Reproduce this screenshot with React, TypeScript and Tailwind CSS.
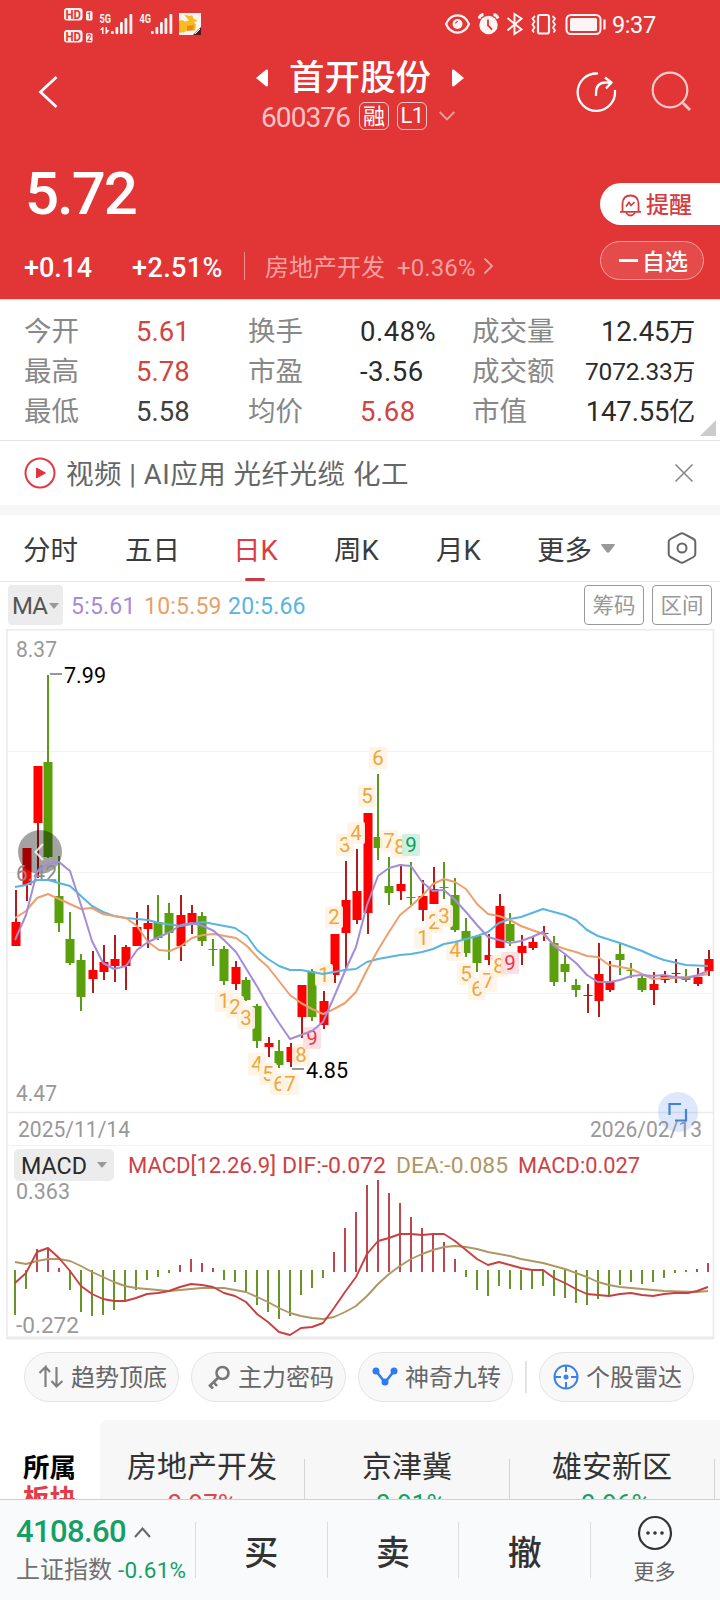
import type { ReactNode } from 'react'
import clsx from 'clsx'

const UP = '#fe0000'
const DOWN = '#5aa00d'

// x, direction, high, body top, body bottom, low
type Candle = [number, 'u' | 'd', number, number, number, number]

const candles: Candle[] = [
  [16, 'u', 890, 922, 946, 946],
  [27, 'u', 848, 848, 885, 901],
  [38, 'u', 766, 766, 823, 878],
  [48, 'd', 675, 762, 857, 858],
  [59, 'd', 856, 896, 923, 932],
  [70, 'd', 912, 939, 963, 965],
  [81, 'd', 954, 960, 997, 1011],
  [93, 'u', 951, 970, 979, 993],
  [104, 'u', 945, 962, 972, 980],
  [115, 'u', 935, 959, 966, 982],
  [126, 'u', 945, 947, 966, 990],
  [137, 'u', 912, 927, 946, 946],
  [148, 'u', 905, 923, 929, 948],
  [158, 'd', 895, 922, 938, 940],
  [169, 'd', 903, 913, 933, 960],
  [181, 'u', 895, 915, 946, 961],
  [192, 'u', 905, 913, 924, 934],
  [202, 'd', 912, 916, 941, 946],
  [213, 'd', 939, 949, 950, 966],
  [224, 'd', 946, 949, 981, 985],
  [236, 'u', 961, 967, 984, 990],
  [246, 'd', 977, 980, 1000, 1001],
  [257, 'd', 1004, 1006, 1041, 1048],
  [269, 'u', 1037, 1043, 1047, 1057],
  [279, 'd', 1040, 1051, 1065, 1068],
  [291, 'u', 1043, 1047, 1062, 1067],
  [302, 'u', 985, 985, 1017, 1038],
  [312, 'd', 969, 971, 1017, 1021],
  [324, 'u', 991, 1001, 1025, 1029],
  [335, 'u', 934, 934, 975, 983],
  [346, 'u', 861, 900, 933, 970],
  [357, 'u', 849, 891, 920, 924],
  [368, 'u', 813, 813, 913, 934],
  [378, 'd', 774, 837, 848, 860],
  [389, 'd', 857, 886, 893, 905],
  [401, 'u', 864, 884, 891, 900],
  [411, 'd', 862, 897, 898, 905],
  [423, 'u', 880, 896, 910, 921],
  [434, 'u', 867, 889, 904, 904],
  [444, 'd', 862, 887, 888, 899],
  [455, 'd', 878, 895, 930, 932],
  [466, 'd', 918, 931, 953, 957],
  [477, 'd', 935, 936, 963, 972],
  [489, 'u', 934, 955, 960, 965],
  [500, 'u', 894, 906, 948, 948],
  [510, 'd', 913, 924, 941, 946],
  [522, 'u', 935, 946, 953, 965],
  [533, 'u', 937, 942, 948, 950],
  [544, 'u', 926, 933, 934, 941],
  [554, 'd', 936, 943, 982, 986],
  [565, 'd', 955, 964, 972, 982],
  [576, 'd', 979, 985, 990, 997],
  [588, 'u', 984, 995, 996, 1013],
  [599, 'u', 943, 974, 1001, 1017],
  [610, 'u', 961, 981, 990, 992],
  [620, 'd', 944, 954, 960, 975],
  [631, 'd', 963, 970, 971, 978],
  [642, 'd', 975, 978, 990, 992],
  [654, 'u', 972, 984, 990, 1005],
  [665, 'u', 971, 976, 980, 983],
  [676, 'u', 959, 973, 974, 983],
  [686, 'd', 969, 978, 980, 982],
  [698, 'u', 968, 977, 984, 986],
  [709, 'u', 950, 959, 971, 976],
]

const ma5 =
  '15,940 26,915 37,872 48,864 59,862 70,871 81,905 92,941 103,963 114,969 126,966 137,950 148,942 159,937 170,932 181,925 192,923 203,926 214,931 225,941 236,952 247,970 258,988 268,1006 279,1023 290,1039 301,1035 312,1031 323,1022 334,997 345,971 356,947 367,905 378,876 389,868 400,865 411,866 422,882 433,891 444,890 455,900 466,912 477,925 488,937 499,940 510,943 521,941 532,937 543,932 554,946 565,954 576,963 587,975 598,982 610,982 620,980 631,976 642,975 653,976 664,975 675,977 687,978 698,975 708,971'
const ma10 =
  '15,918 26,911 37,898 48,894 59,899 70,904 81,909 92,908 103,914 114,916 126,918 137,926 148,942 159,950 170,951 181,946 192,938 203,935 214,934 225,936 236,938 247,946 258,958 268,967 279,981 290,995 301,1003 312,1009 323,1014 334,1009 345,1003 356,992 367,970 378,950 389,932 400,915 411,906 422,896 433,884 444,879 455,882 466,889 477,904 488,914 499,916 510,920 521,926 532,930 543,934 554,945 565,949 576,952 587,956 598,957 609,965 620,967 631,969 642,974 653,979 664,978 675,978 687,977 698,976 708,974'
const ma20 =
  '15,887 26,885 37,880 48,880 59,883 70,886 81,896 92,906 103,912 114,916 126,918 148,920 159,923 181,926 192,924 203,922 214,924 235,928 247,936 257,950 268,959 279,966 290,970 301,970 312,972 323,974 334,972 345,970 356,969 367,962 378,959 400,955 411,954 422,952 433,949 444,944 455,942 466,939 477,936 488,932 499,923 510,919 521,917 543,909 565,915 576,920 587,930 598,936 620,943 642,951 653,956 664,960 686,965 708,966'

// one value per bar, 11px apart: bottom of a green bar, top of a red one
const macdBars = [
  1315, 1289, -1249, -1248, -1268, 1290, 1312, 1316, 1315, 1310, 1302, 1290, 1280, 1277, 1273, -1265,
  -1259, -1263, -1268, 1280, 1282, 1292, 1305, 1312, 1319, 1316, 1295, 1288, 1278, -1252, -1228, -1212,
  -1185, -1180, -1193, -1203, -1217, -1228, -1235, -1242, -1259, 1277, 1290, 1296, 1286, 1289, 1290, 1289,
  1286, 1296, 1298, 1303, 1305, 1299, 1296, 1285, 1282, 1284, 1282, 1278, 1273, 1272, -1269, -1263,
]
const dif =
  '15,1283 26,1273 37,1252 48,1248 59,1258 70,1271 81,1286 92,1294 103,1299 114,1301 125,1301 136,1298 147,1294 158,1293 169,1291 180,1287 191,1284 202,1285 213,1287 224,1293 235,1296 246,1302 257,1314 268,1322 279,1332 290,1335 301,1328 312,1327 323,1323 334,1308 345,1292 356,1277 367,1254 378,1241 389,1238 400,1234 411,1234 422,1235 433,1234 444,1234 455,1241 466,1250 477,1259 488,1265 499,1262 510,1265 521,1268 532,1270 543,1270 554,1278 565,1283 576,1289 587,1294 598,1295 609,1296 620,1294 631,1293 642,1295 653,1296 664,1294 675,1293 688,1293 697,1291 708,1287'
const dea =
  '15,1262 26,1264 37,1261 48,1259 59,1259 70,1261 81,1266 92,1272 103,1277 114,1282 125,1286 136,1288 147,1289 158,1290 169,1291 180,1290 191,1289 202,1288 224,1288 235,1290 246,1292 257,1297 268,1302 279,1308 290,1313 301,1316 312,1318 323,1319 334,1317 345,1312 356,1306 367,1296 378,1284 389,1274 400,1266 411,1259 422,1254 433,1250 444,1247 455,1246 466,1247 477,1249 488,1252 510,1256 521,1259 543,1263 565,1269 587,1277 598,1282 609,1285 620,1287 642,1289 664,1291 697,1292 708,1291'

const tags: [number, number, number, string?][] = [
  [224, 1001, 1],
  [235, 1007, 2],
  [246, 1018, 3],
  [257, 1064, 4],
  [268, 1074, 5],
  [279, 1084, 6],
  [290, 1084, 7],
  [301, 1055, 8],
  [312, 1038, 9, 'red'],
  [324, 975, 1],
  [334, 917, 2],
  [345, 845, 3],
  [356, 833, 4],
  [367, 796, 5],
  [378, 758, 6],
  [389, 841, 7],
  [400, 847, 8],
  [411, 845, 9, 'green'],
  [423, 938, 1],
  [434, 922, 2],
  [444, 916, 3],
  [455, 950, 4],
  [466, 974, 5],
  [477, 989, 6],
  [488, 981, 7],
  [499, 966, 8],
  [510, 963, 9, 'red'],
]

const stats = [
  ['今开', '5.61', 'up', '换手', '0.48%', '', '成交量', '12.45', '万'],
  ['最高', '5.78', 'up', '市盈', '-3.56', '', '成交额', '7072.33', '万'],
  ['最低', '5.58', 'mid', '均价', '5.68', 'up', '市值', '147.55', '亿'],
]

const plates = [
  { name: '房地产开发', change: '0.97%', up: true },
  { name: '京津冀', change: '-0.91%', up: false },
  { name: '雄安新区', change: '-0.96%', up: false },
]

function StatusBar() {
  return (
    <div className="flex h-12 justify-between pl-16 pr-[62px] text-white">
      <svg width="140" height="48" fill="#fff" fontFamily="Roboto" opacity=".94">
        {[8, 30].map((y, i) => (
          <g key={y}>
            <rect x="0" y={y} width="18.500" height="12.500" rx="3" />
            <text x="1.500" y={y + 11} fontSize="13.500" fontWeight="700" fill="#e23535" textLength="15.500" lengthAdjust="spacingAndGlyphs">
              HD
            </text>
            <rect x="22" y={y + 3} width="6.500" height="9.500" rx="1.500" />
            <text x="23" y={y + 11} fontSize="9" fontWeight="700" fill="#e23535" textLength="4.500" lengthAdjust="spacingAndGlyphs">
              {i + 1}
            </text>
          </g>
        ))}
        <text x="35.500" y="23" fontSize="12.500" fontWeight="700" textLength="11.500" lengthAdjust="spacingAndGlyphs">
          5G
        </text>
        <path d="M35.500 30 l3 -3 h1 v7 h-1.500 v-4h-2.500z M41.500 27 h1.500 v3 h2.500 l-3 4 h-1z" />
        <text x="75.500" y="23" fontSize="12.500" fontWeight="700" textLength="11.500" lengthAdjust="spacingAndGlyphs">
          4G
        </text>
        {[0, 40].map((x) => (
          <g key={x}>
            <rect x={x + 47} y="31" width="2.800" height="3" rx="1" />
            <rect x={x + 51.500} y="27" width="2.800" height="7" rx="1" />
            <rect x={x + 56} y="22" width="2.800" height="12" rx="1" />
            <rect x={x + 60.500} y="18" width="2.800" height="16" rx="1" />
            <rect x={x + 65.500} y="14" width="2.800" height="20" rx="1" />
          </g>
        ))}
        <rect x="115" y="13" width="22" height="22" />
        <path d="M115 21 l3 -1 l3 1.500 l4 -1 l-5 -6 l6 1.500 l2 -1 l2 4 l3.500 1.500 l-3.500 2 l2 2 l-1 6 h-8 l-3 2 h-5z" fill="#fbc51c" />
        <path d="M123 26 l7 -1 l-1 5 l-6 1z" fill="#f08a24" />
        <path d="M137 27 v8 h-8 l3 -3z" fill="#4b1414" />
        <path d="M131 34 L136 29" stroke="#fff" strokeWidth="1" />
      </svg>
      <div className="flex">
        <svg width="166" height="48" fill="none" stroke="#fff" strokeWidth="2.200" opacity=".95">
          <path d="M1 24 C6 12.500 19 12.500 24 24 C19 35.500 6 35.500 1 24z" />
          <circle cx="12.500" cy="24" r="5" fill="#fff" stroke="none" />
          <path d="M10.500 23.500 a2.500 2.500 0 0 1 2.500 -2" stroke="#e23535" strokeWidth="1.200" />
          <circle cx="43.500" cy="25" r="9.200" fill="#fff" stroke="none" />
          <path d="M43 19.500 v6 l4 4" stroke="#e23535" strokeWidth="1.800" />
          <path d="M34 18.500 q1 -3.500 4.500 -4 M53 18.500 q-1 -3.500 -4.500 -4" strokeWidth="2.800" />
          <path d="M62.500 18 L76.500 29.500 L69.500 34 V14 L76.500 18.500 L62.500 30.500" strokeWidth="2" />
          <rect x="93" y="15" width="11" height="18.500" rx="2" />
          <path d="M90 16 l-2.500 2.500 l2 3 l-2 3 l2 3 l-2 3 l1.500 2 M107.500 16 l2.500 2.500 l-2 3 l2 3 l-2 3 l2 3 l-1.500 2" strokeWidth="1.800" />
          <rect x="121.500" y="15" width="34" height="19" rx="4.500" strokeWidth="2" />
          <rect x="125" y="18" width="27" height="13" rx="1.500" fill="#fff" stroke="none" />
          <path d="M159.500 19.500 v10" strokeWidth="2.200" />
        </svg>
        <span className="ml-px mt-2 w-[46px] font-['Roboto'] text-[23.500px] leading-[34px] tracking-[-0.4px]">9:37</span>
      </div>
    </div>
  )
}

function Header() {
  return (
    <header className="h-[300px] border-b border-[#fbdcdc] bg-[#e23535] text-white">
      <StatusBar />
      <div className="flex h-[90px] items-start">
        <svg className="ml-[36px] mt-[26px]" width="24" height="36" fill="none" stroke="#fff" strokeWidth="2.800">
          <path d="M20.500 3 L4.500 18 L20.500 33" />
        </svg>
        <div className="ml-[164px] mt-[10px] w-[272px]">
          <div className="flex h-10 items-center justify-center gap-[21px]">
            <svg width="12" height="18" fill="#fff">
              <path d="M0 9 L10 .8 Q12 0 12 2 V16 Q12 18 10 17.200z" />
            </svg>
            <h1 className="text-[35.500px] leading-10 font-medium">首开股份</h1>
            <svg width="12" height="18" fill="#fff">
              <path d="M12 9 L2 .8 Q0 0 0 2 V16 Q0 18 2 17.200z" />
            </svg>
          </div>
          <div className="mt-[4px] flex h-[28px] items-center pl-[37px]">
            <span className="w-[98px] pt-[3px] text-[28px] tracking-[-0.9px] text-[#fbc4c4]">600376</span>
            <span className="flex h-7 w-[30px] items-center justify-center rounded-md border border-[#f8c8c8] pt-px text-[22px]">
              融
            </span>
            <span className="ml-2 flex h-7 w-[30px] items-center justify-center rounded-md border border-[#f8c8c8] text-[22px] tracking-[-0.5px]">
              L1
            </span>
            <svg className="ml-3" width="16" height="10" fill="none" stroke="#f3a0a0" strokeWidth="1.800">
              <path d="M.7 1 L8 8.500 L15.300 1" />
            </svg>
          </div>
        </div>
        <svg className="ml-[80px] mt-[23px]" width="42" height="42" fill="none" stroke="#fff" strokeWidth="2.300">
          <path d="M21 2.500 A18.700 18.700 0 1 0 39 20" strokeLinecap="round" />
          <path d="M20 25 V22 Q20 11.500 30 11.500 H35.500 M29 6.500 L35.500 11.500 L30 17.500" strokeLinejoin="round" />
        </svg>
        <svg className="ml-[32px] mt-[21px]" width="44" height="46" fill="none" stroke="#f9cccc" strokeWidth="2.200">
          <circle cx="20" cy="21" r="17.300" />
          <path d="M33 34 L40 41" strokeWidth="2.800" />
        </svg>
      </div>
      <div className="flex h-[100px] items-start justify-between">
        <span className="ml-[25px] mt-[26px] text-[60px] leading-[60px] font-medium tracking-[-2px]">5.72</span>
        <button className="mt-[45px] flex h-[42px] w-[120px] items-center rounded-l-full bg-white pt-[3px] pl-[19px] text-[23px] font-medium text-[#d43c3f]">
          <svg className="mr-[4px] -mt-[2px]" width="23" height="24" fill="none" stroke="#d43c3f" strokeWidth="1.800">
            <path d="M3.500 18 V10.500 Q4 2.500 11.500 2.500 Q19 2.500 19.500 10.500 V18 M1 18.800 H22 M7 20 Q11.500 25 16 20" />
            <path d="M7 13.500 L10 9.500 L12 12.500 L15.500 9" strokeWidth="1.700" />
          </svg>
          提醒
        </button>
      </div>
      <div className="flex h-[61px] items-start pl-6">
        <div className="flex h-[56px] items-center">
          <span className="w-[108px] pt-[4px] text-[27px] font-medium tracking-[-0.1px]">+0.14</span>
          <span className="w-[112px] pt-[4px] text-[27px] font-medium tracking-[0.4px]">+2.51%</span>
          <span className="mr-[20px] h-7 w-px bg-[#f08d8d]" />
          <span className="w-[132px] pt-[4px] text-[24px] text-[#f4a0a0]">房地产开发</span>
          <span className="w-[86px] pt-[3px] text-[24px] tracking-[0.1px] text-[#f4a0a0]">+0.36%</span>
          <svg width="11" height="18" fill="none" stroke="#f4a0a0" strokeWidth="1.800">
            <path d="M1.500 1.500 L9 9 L1.500 16.500" />
          </svg>
        </div>
        <button className="mt-[3px] ml-[106px] flex h-[39px] w-[104px] items-center rounded-full border border-[#f1a0a0] bg-[#e64b4b] pt-[4px] pl-[18px] text-[23px] font-medium">
          <span className="-mt-[4px] mr-[4px] h-[2.500px] w-[19px] bg-white" />
          自选
        </button>
      </div>
    </header>
  )
}

function Stats() {
  return (
    <section className="relative h-[141px] border-b border-[#e6e6e6] pt-[12px] text-[27.500px] text-[#2b2b2b]">
      {stats.map((row) => (
        <div key={row[0]} className="flex h-10 items-center pl-6 pr-[25px]">
          <span className="w-[112px] text-[#888]">{row[0]}</span>
          <span className={clsx('w-[112px]', row[2] === 'up' ? 'text-[#d04540]' : 'text-[#404040]')}>{row[1]}</span>
          <span className="w-[112px] text-[#888]">{row[3]}</span>
          <span className={clsx('w-[112px] tracking-[0.5px]', row[5] === 'up' && 'text-[#d04540]')}>{row[4]}</span>
          <span className="text-[#888]">{row[6]}</span>
          <span className={clsx('ml-auto tracking-[-0.2px]', row[7] === '7072.33' && 'text-[24.500px]')}>
            {row[7]}
            <span className={row[7] === '7072.33' ? 'text-[22.500px]' : 'text-[26px]'}>{row[8]}</span>
          </span>
        </div>
      ))}
      <svg className="absolute right-1 bottom-1" width="16" height="16" fill="#ccc">
        <path d="M16 0 V16 H0z" />
      </svg>
    </section>
  )
}

function VideoBar() {
  return (
    <section className="flex h-[74px] items-center border-b-[10px] border-[#f7f7f7] pl-6 pr-[26px]">
      <svg width="32" height="32" fill="none" stroke="#dc3c46" strokeWidth="2">
        <circle cx="16" cy="16" r="14.500" />
        <path d="M12.500 11 V21 L21.500 16z" fill="#e8303c" strokeWidth="1" />
      </svg>
      <span className="ml-[10px] pt-[4px] text-[27.500px] tracking-[0.5px] whitespace-pre text-[#666]">
        视频 | AI应用 光纤光缆 化工
      </span>
      <svg className="ml-auto" width="20" height="20" stroke="#888" strokeWidth="1.600">
        <path d="M1.500 1.500 L18.500 18.500 M18.500 1.500 L1.500 18.500" />
      </svg>
    </section>
  )
}

function Tabs() {
  return (
    <nav className="flex h-[67px] items-center border-b border-[#e6e6e6] pl-[23px] text-[27.500px] text-[#3c3c3c]">
      <span className="w-[102px] pt-[5px]">分时</span>
      <span className="w-[108px] pt-[5px]">五日</span>
      <span className="relative flex h-full w-[101px] items-center pt-[5px] text-[#dc3c46]">
        日K
        <i className="absolute bottom-0 left-[12px] h-[3px] w-5 rounded-sm bg-[#c83c46]" />
      </span>
      <span className="w-[102px] pt-[5px]">周K</span>
      <span className="w-[101px] pt-[5px]">月K</span>
      <span className="w-[64px] pt-[5px]">更多</span>
      <svg width="14" height="9" fill="#999">
        <path d="M1 0 H13 Q14.500 0 13.500 1.500 L8.500 8 Q7 9.500 5.500 8 L.5 1.500 Q-.5 0 1 0z" />
      </svg>
      <svg className="ml-[52px]" width="30" height="32" fill="none" stroke="#666" strokeWidth="2">
        <path d="M13 1.800 Q15 .8 17 1.800 L26.500 7 Q28.300 8 28.300 10 V22 Q28.300 24 26.500 25 L17 30.200 Q15 31.200 13 30.200 L3.500 25 Q1.700 24 1.700 22 V10 Q1.700 8 3.500 7z" />
        <circle cx="15" cy="16" r="4.500" />
      </svg>
    </nav>
  )
}

function MaRow() {
  return (
    <div className="flex h-[47px] items-center pb-px pl-2 pr-[8px] text-[23px]">
      <span className="flex h-10 w-[55px] shrink-0 items-center rounded bg-[#ececec] pt-px pl-[4px] text-[24px] tracking-[-0.8px] text-[#555]">
        MA
        <svg className="ml-[2px]" width="10" height="6" fill="#999">
          <path d="M0 0 H10 L5 6z" />
        </svg>
      </span>
      <span className="ml-2 w-[73px] pt-[2px] tracking-[0.2px] text-[#a58cd8]">5:5.61</span>
      <span className="w-[84px] pt-[2px] tracking-[0.2px] text-[#e8a06a]">10:5.59</span>
      <span className="pt-[2px] tracking-[0.2px] text-[#5ab4e1]">20:5.66</span>
      <button className="ml-auto h-10 w-[60px] rounded border border-[#999] pt-[2px] text-[21.500px] text-[#999]">筹码</button>
      <button className="ml-2 h-10 w-[60px] rounded border border-[#999] pt-[2px] text-[21.500px] text-[#999]">区间</button>
    </div>
  )
}

function Label({ x, y, w, fill, children }: { x: number; y: number; w: number; fill: string; children: ReactNode }) {
  return (
    <text x={x} y={y} fontSize="21.500" fill={fill} textLength={w} lengthAdjust="spacingAndGlyphs">
      {children}
    </text>
  )
}

function Chart() {
  return (
    <svg className="block font-['Roboto']" width="720" height="711" viewBox="0 629 720 711">
      <g fill="none" stroke="#ebebeb">
        <path d="M7 629.500 V1339 M713.500 629.500 V1339 M6 629.800 H714 M7 1112.500 H713" strokeWidth="1.500" />
        <path d="M8 751.500 H713 M8 872.500 H713 M8 993.500 H713 M8 1145.500 H713" stroke="#f1f1f1" />
        <path d="M6 1338 H714" strokeWidth="3" />
      </g>

      <rect x="14" y="1149" width="100" height="32" rx="5" fill="#ececec" />
      <Label x={16} y={657} w={41} fill="#999">8.37</Label>
      <Label x={16} y={1101} w={41} fill="#999">4.47</Label>
      <Label x={18} y={1137} w={112} fill="#999">2025/11/14</Label>
      <Label x={590} y={1137} w={112} fill="#999">2026/02/13</Label>

      {candles.map(([x, dir, high, top, bottom, low]) => (
        <g key={x}>
          <path d={`M${x} ${high} V${low}`} stroke={dir === 'u' ? '#b41c1c' : '#5a9a1c'} strokeWidth="2" />
          <rect x={x - 4.500} y={top} width="9" height={Math.max(bottom - top, 1)} fill={dir === 'u' ? UP : DOWN} />
        </g>
      ))}

      {/* nine-turn counters */}
      {tags.map(([x, y, n, kind]) => (
        <g key={x}>
          <rect
            x={x - 9}
            y={y - 11}
            width="18"
            height="22"
            rx="2"
            fill={kind === 'red' ? '#ffdde0' : kind === 'green' ? '#ccefdf' : '#fef3e5'}
            opacity=".93"
          />
          <text
            x={x}
            y={y + 7}
            fontSize="20.500"
            textAnchor="middle"
            fill={kind === 'red' ? '#e6394b' : kind === 'green' ? '#0fa05f' : '#eda63c'}
          >
            {n}
          </text>
        </g>
      ))}

      <circle cx="40" cy="852" r="22" fill="#000" opacity=".36" />
      <path d="M43 844 L35.500 852 L43 860" fill="none" stroke="#fff" strokeWidth="2" opacity=".8" />
      <Label x={16} y={881} w={41} fill="#8c8c8c">6.42</Label>

      <g fill="none" strokeWidth="2" strokeLinejoin="round">
        <polyline points={ma20} stroke="#5ab4e1" />
        <polyline points={ma10} stroke="#eba06e" />
        <polyline points={ma5} stroke="#a58cd8" />
      </g>
      <path d="M50 674 H62 M292 1069 H304" stroke="#777" strokeWidth="1.600" />
      <Label x={64} y={683} w={42} fill="#000">7.99</Label>
      <Label x={306} y={1078} w={42} fill="#000">4.85</Label>

      <circle cx="678" cy="1112" r="20" fill="#5a8cf0" opacity=".2" />
      <path d="M669.500 1115 V1104 H681 M686 1109 V1120.500 H675" fill="none" stroke="#4682d2" strokeWidth="2.200" />

      {macdBars.map((v, i) => {
        const x = 15 + i * 11
        return v > 0 ? (
          <path key={i} d={`M${x} 1270 V${v}`} stroke="#649628" strokeWidth="2" />
        ) : (
          <path key={i} d={`M${x} ${-v} V1272`} stroke="#be4650" strokeWidth="2" />
        )
      })}
      <g fill="none" strokeWidth="1.900" strokeLinejoin="round">
        <polyline points={dea} stroke="#af9664" />
        <polyline points={dif} stroke="#c84141" />
      </g>
      <text x="21" y="1173.500" fontSize="23.500" fill="#2a2a2a" textLength="66" lengthAdjust="spacingAndGlyphs">
        MACD
      </text>
      <path d="M97 1162 H107 L102 1168z" fill="#999" />
      <Label x={128} y={1173} w={148} fill="#cd4146">MACD[12.26.9]</Label>
      <Label x={282} y={1173} w={104} fill="#cd4146">DIF:-0.072</Label>
      <Label x={396} y={1173} w={112} fill="#af9664">DEA:-0.085</Label>
      <Label x={518} y={1173} w={122} fill="#cd4146">MACD:0.027</Label>
      <Label x={16} y={1199} w={54} fill="#999">0.363</Label>
      <Label x={16} y={1333} w={63} fill="#999">-0.272</Label>
    </svg>
  )
}

function Pill({ icon, label }: { icon: ReactNode; label: string }) {
  return (
    <button className="flex h-[50px] w-[155px] items-center rounded-full border border-[#e4e4e4] bg-[#f8f8f8] pl-[13px] text-[24px] whitespace-nowrap text-[#666]">
      <span className="flex w-[33px]">{icon}</span>
      <span className="pt-[2px]">{label}</span>
    </button>
  )
}

function Tools() {
  return (
    <section className="flex h-[80px] items-start gap-3 pl-6 pt-3">
      <Pill
        label="趋势顶底"
        icon={
          <svg width="26" height="24" fill="none" stroke="#808080" strokeWidth="2.200">
            <path d="M1.500 8 L7.500 2 V22 M7.500 2 L12 7 M18.500 2 V21.500 M13.500 16 L18.500 21.500 L24.500 16" />
          </svg>
        }
      />
      <Pill
        label="主力密码"
        icon={
          <svg className="ml-[2px]" width="24" height="24" fill="none" stroke="#777" strokeWidth="2.600">
            <circle cx="15.500" cy="8" r="6" />
            <path d="M11.500 12.500 L2 21.500 M6.500 17 L10 21 M3 20.500 L6 23.500" />
          </svg>
        }
      />
      <Pill
        label="神奇九转"
        icon={
          <svg width="26" height="22" fill="#2f7bf0" stroke="#2f7bf0" strokeWidth="2.600">
            <path d="M4 5 L13 16.500 L22 5" fill="none" />
            <circle cx="4" cy="5" r="2.200" />
            <circle cx="13" cy="16" r="2.200" />
            <circle cx="22" cy="5" r="2.200" />
          </svg>
        }
      />
      <span className="mt-[9px] h-8 w-[2px] bg-[#e2e2e2]" />
      <Pill
        label="个股雷达"
        icon={
          <svg width="26" height="26" fill="none" stroke="#3c82e6" strokeWidth="2">
            <circle cx="13" cy="13" r="11.500" />
            <circle cx="13" cy="13" r="1.500" fill="#3c82e6" />
            <path d="M13 1 V8 M13 18 V25 M1 13 H8 M18 13 H25" />
          </svg>
        }
      />
    </section>
  )
}

function Plates() {
  return (
    <section className="flex h-[79px] overflow-hidden">
      <div className="w-[100px] pl-[23px] pt-[32px] text-[26.500px] leading-[31px] font-bold">
        <div className="text-black">所属</div>
        <div className="text-[#e23c46]">板块</div>
      </div>
      <div className="flex flex-1 overflow-hidden rounded-tl-lg bg-[#f7f7f7]">
        {plates.map((p) => (
          <div key={p.name} className="relative w-[205px] shrink-0 pt-[27px] pr-px text-center">
            <div className="text-[30px] leading-10 text-[#333]">{p.name}</div>
            <div className={clsx('-mt-px text-[26px] leading-9', p.up ? 'text-[#dc4650]' : 'text-[#14a064]')}>{p.change}</div>
            <i className="absolute right-0 bottom-0 h-10 w-px bg-[#d4d4d4]" />
          </div>
        ))}
      </div>
    </section>
  )
}

function BottomBar() {
  return (
    <footer className="flex h-[101px] items-center border-t border-[#cfcfcf] bg-[#f9fafc]">
      <div className="h-full w-[195px] shrink-0 pl-4 pt-[12px] whitespace-nowrap">
        <div className="flex items-center text-[31px] leading-10 font-medium tracking-[-0.6px] text-[#14a064]">
          4108.60
          <svg className="ml-[8px]" width="17" height="11" fill="none" stroke="#666" strokeWidth="2">
            <path d="M1 10 L8.500 1.500 L16 10" />
          </svg>
        </div>
        <div className="flex text-[24px] leading-[36px] text-[#707070]">
          上证指数
          <span className="ml-[6px] text-[22.500px] tracking-[0.3px] text-[#14a064]">-0.61%</span>
        </div>
      </div>
      {['买', '卖', '撤'].map((t) => (
        <button
          key={t}
          className="h-14 w-[131.700px] shrink-0 border-l border-[#dcdcdc] pt-[6px] text-[34px] leading-[46px] font-medium text-[#333]"
        >
          {t}
        </button>
      ))}
      <div className="flex h-14 flex-1 flex-col items-center border-l border-[#dcdcdc] pr-[2px]">
        <svg className="-mt-[7px] shrink-0" width="36" height="36" fill="#333">
          <circle cx="18" cy="18" r="16" fill="none" stroke="#333" strokeWidth="2.200" />
          <circle cx="11" cy="18" r="1.800" />
          <circle cx="18" cy="18" r="1.800" />
          <circle cx="25" cy="18" r="1.800" />
        </svg>
        <span className="mt-[7px] text-[21px] leading-7 text-[#666]">更多</span>
      </div>
    </footer>
  )
}

export default function App() {
  return (
    <div className="h-[1600px] w-[720px] overflow-hidden bg-white font-['Roboto','Noto_Sans_CJK_SC',sans-serif] leading-none">
      <Header />
      <Stats />
      <VideoBar />
      <Tabs />
      <MaRow />
      <Chart />
      <Tools />
      <Plates />
      <BottomBar />
    </div>
  )
}
